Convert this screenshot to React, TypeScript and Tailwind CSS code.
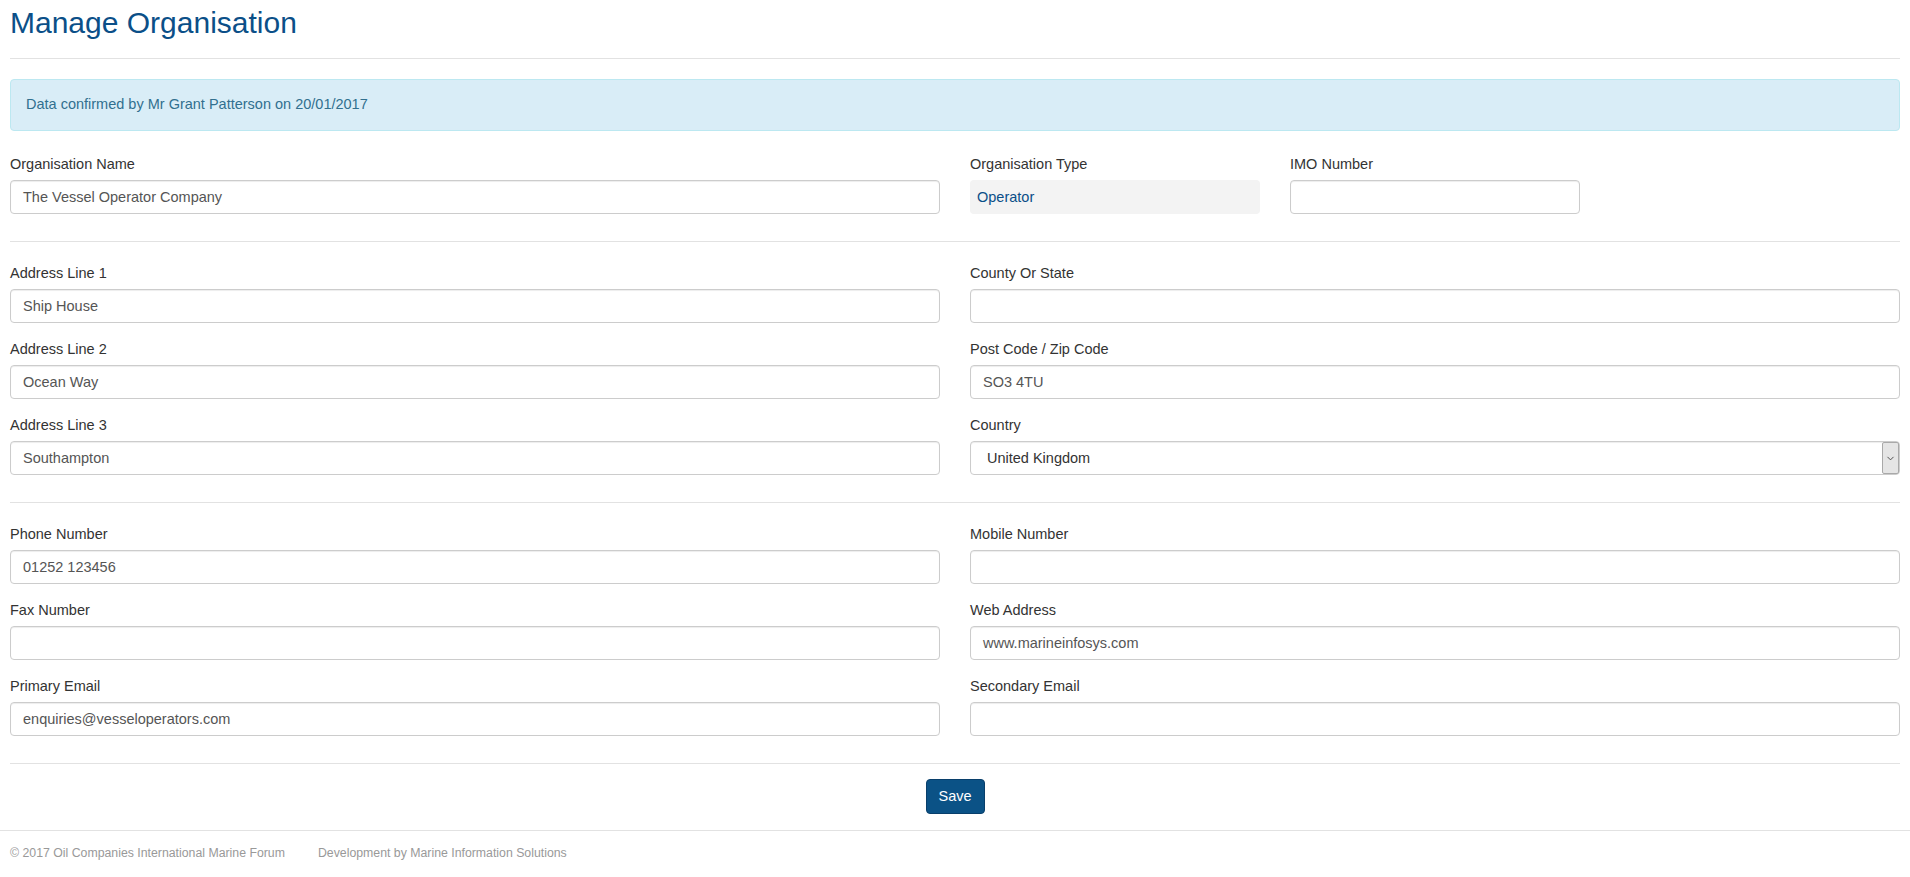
import { ChevronDown } from 'lucide-react'

function Field({ label, value, children }: { label: string; value?: string; children?: React.ReactNode }) {
  return (
    <div>
      <label className="block h-[21px] leading-[21px] mb-[5px] text-[#333]">{label}</label>
      {children ?? (
        <div className="h-[34px] px-[12px] pt-px flex items-center rounded-[4px] border border-[#ccc] bg-white text-[#555] shadow-[inset_0_1px_1px_rgba(0,0,0,0.075)]">
          {value}
        </div>
      )}
    </div>
  )
}

function Rule() {
  return <div className="h-px bg-[#e2e2e2]" />
}

export default function App() {
  return (
    <div className="min-h-[877px] bg-white text-[14.5px] font-['Liberation_Sans',Arial,sans-serif]">
      <div className="px-[10px]">
        {/* Heading */}
        <h2 className="pt-[6px] text-[30px] leading-[33px] text-[#0b4f88]">Manage Organisation</h2>
        <div className="mt-[19px]">
          <Rule />
        </div>

        {/* Confirmation */}
        <div className="mt-[20px] mb-[23px] h-[52px] px-[15px] flex items-center rounded-[4px] border border-[#bce8f1] bg-[#d9edf7] text-[#31708f]">
          Data confirmed by Mr Grant Patterson on 20/01/2017
        </div>

        {/* Organisation */}
        <div className="grid grid-cols-2 gap-x-[30px] pb-[27px]">
          <Field label="Organisation Name" value="The Vessel Operator Company" />
          <div className="grid grid-cols-3 gap-x-[30px]">
            <Field label="Organisation Type">
              <div className="h-[34px] pl-[7px] pt-px flex items-center rounded-[4px] bg-[#f3f3f3] text-[#0b4f88]">Operator</div>
            </Field>
            <Field label="IMO Number" value="" />
          </div>
        </div>
        <Rule />

        {/* Address */}
        <div className="grid grid-cols-2 gap-x-[30px] gap-y-[16px] pt-[21px] pb-[27px]">
          <Field label="Address Line 1" value="Ship House" />
          <Field label="County Or State" value="" />
          <Field label="Address Line 2" value="Ocean Way" />
          <Field label="Post Code / Zip Code" value="SO3 4TU" />
          <Field label="Address Line 3" value="Southampton" />
          <Field label="Country">
            <div className="relative h-[34px] pl-[16px] pt-px flex items-center rounded-[4px] border border-[#ccc] bg-white text-[#333] shadow-[inset_0_1px_1px_rgba(0,0,0,0.075)]">
              United Kingdom
              <div className="absolute right-0 top-0 bottom-0 w-[17px] flex items-center justify-center border border-[#a9a9a9] rounded-[2px] bg-[#e5e5e5]">
                <ChevronDown className="w-[11px] h-[11px] text-[#444]" strokeWidth={2} />
              </div>
            </div>
          </Field>
        </div>
        <Rule />

        {/* Contact */}
        <div className="grid grid-cols-2 gap-x-[30px] gap-y-[16px] pt-[21px] pb-[27px]">
          <Field label="Phone Number" value="01252 123456" />
          <Field label="Mobile Number" value="" />
          <Field label="Fax Number" value="" />
          <Field label="Web Address" value="www.marineinfosys.com" />
          <Field label="Primary Email" value="enquiries@vesseloperators.com" />
          <Field label="Secondary Email" value="" />
        </div>
        <Rule />

        <div className="flex justify-center pt-[15px] pb-[16px]">
          <button className="h-[35px] w-[59px] rounded-[4px] border border-[#093f6b] bg-[#0b5286] text-white">Save</button>
        </div>
      </div>

      {/* Footer */}
      <div className="border-t border-[#e2e2e2] px-[10px] pt-[14px] flex gap-[33px] text-[12.3px] leading-[17px] text-[#999]">
        <span>© 2017 Oil Companies International Marine Forum</span>
        <span>Development by Marine Information Solutions</span>
      </div>
    </div>
  )
}
